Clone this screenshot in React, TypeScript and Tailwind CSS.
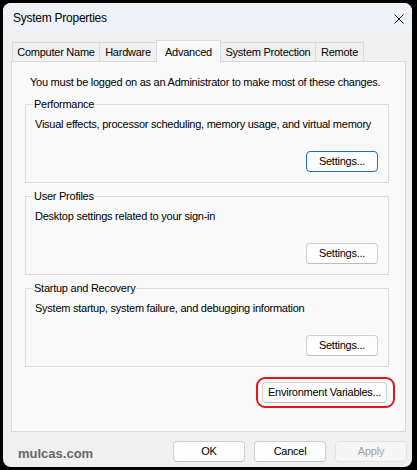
import { FC, ReactNode } from 'react';

const Btn: FC<{
  children: ReactNode;
  focused?: boolean;
  disabled?: boolean;
  className?: string;
}> = ({
  children, focused, disabled, className = 'w-[72px]',
}) => {
  let look = 'border-[#d0d0d0] border-b-[#bdbdbd] bg-[#fdfdfd] text-black';
  if (focused) look = 'border-[#1f6fc6] bg-[#fdfdfd] text-black';
  if (disabled) look = 'border-[#e3e3e3] bg-[#f5f5f5] text-[#a3a3a3]';
  return (
    <div className={`h-[21px] ${className} rounded-[4px] border ${look} flex items-center justify-center leading-none whitespace-nowrap`}>
      {children}
    </div>
  );
};

const Group: FC<{ title: string; text: string; focused?: boolean; className?: string }> = ({
  title, text, focused, className = '',
}) => (
  <fieldset className={`min-w-0 border border-[#dcdcdc] pl-[9px] pr-[10px] pb-[10px] ${className}`}>
    <legend className="-ml-[2px] px-[1px] leading-[16px]">{title}</legend>
    <p className="mt-[4px] leading-[16px] whitespace-nowrap">{text}</p>
    <div className="mt-[19px] flex justify-end">
      <Btn focused={focused}>Settings...</Btn>
    </div>
  </fieldset>
);

const tabs = [
  { name: 'Computer Name', w: 'w-[88px]' },
  { name: 'Hardware', w: 'w-[58px]' },
  { name: 'Advanced', w: 'w-[65px]', active: true },
  { name: 'System Protection', w: 'w-[96px]' },
  { name: 'Remote', w: 'w-[49px]' },
];

const App: FC = () => (
  <div className="w-[417px] h-[470px] bg-black pt-[3px] pl-[3px] font-['Liberation_Sans',Arial,sans-serif] text-[11px] tracking-[-0.25px] text-black">
    <div className="w-[409px] h-[464px] rounded-[8px] overflow-hidden bg-[#f0f0f0] flex flex-col">
      {/* title bar */}
      <div className="h-[30px] shrink-0 bg-[#eef2f7] flex items-center justify-between pl-[10px] pr-[8px]">
        <span className="text-[12px]">System Properties</span>
        <svg width="10" height="10" viewBox="0 0 10 10" className="mt-[1px]" aria-hidden="true">
          <path d="M0.5 0.5L9.5 9.5M9.5 0.5L0.5 9.5" stroke="#1a1a1a" strokeWidth="1" />
        </svg>
      </div>

      {/* body */}
      <div className="pt-[7px] pl-[8px] pr-[6px]">
        <div className="flex items-end h-[21px] pl-[1px]">
          {tabs.map((t) => (
            <div
              key={t.name}
              className={
                t.active
                  ? `${t.w} -ml-px h-[22px] -mb-px relative z-10 border border-b-0 border-[#d9d9d9] bg-[#f9f9f9] flex items-start justify-center pt-[3px] whitespace-nowrap`
                  : `${t.w} -ml-px first:ml-0 h-[19px] border border-b-0 border-[#d9d9d9] bg-[#f0f0f0] flex items-center justify-center whitespace-nowrap`
              }
            >
              {t.name}
            </div>
          ))}
        </div>

        <div className="h-[371px] border border-[#d9d9d9] bg-[#f9f9f9] pl-[13px] pr-[16px] pt-[12px]">
          <p className="pl-[5px] leading-[16px] whitespace-nowrap">
            You must be logged on as an Administrator to make most of these changes.
          </p>
          <Group
            className="mt-[6px]"
            title="Performance"
            text="Visual effects, processor scheduling, memory usage, and virtual memory"
            focused
          />
          <Group className="mt-[5px]" title="User Profiles" text="Desktop settings related to your sign-in" />
          <Group
            className="mt-[5px]"
            title="Startup and Recovery"
            text="System startup, system failure, and debugging information"
          />
          <div className="mt-[10px] -mr-[6px] flex justify-end">
            <div className="rounded-[9px] border-2 border-[#e8141c] pl-[4px] pr-[6px] py-[3px]">
              <Btn className="w-[125px]">Environment Variables...</Btn>
            </div>
          </div>
        </div>
      </div>

      {/* footer */}
      <div className="flex items-start justify-between pt-[9px] pl-[15px] pr-[5px]">
        <span className="mt-[3px] text-[13px] font-bold tracking-normal text-[#676767]">mulcas.com</span>
        <div className="flex gap-[9px]">
          <Btn>OK</Btn>
          <Btn>Cancel</Btn>
          <Btn disabled>Apply</Btn>
        </div>
      </div>
    </div>
  </div>
);

export default App;
